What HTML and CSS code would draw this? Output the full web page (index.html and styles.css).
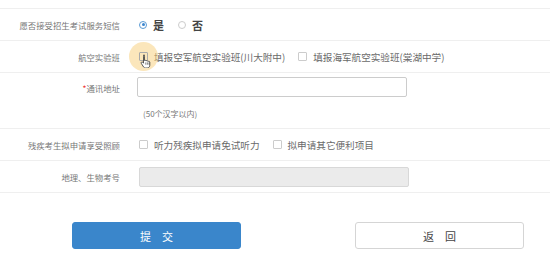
FILE: index.html
```html
<!DOCTYPE html>
<html lang="zh-CN">
<head>
    <meta charset="UTF-8">
    <title>报名信息</title>
    <link rel="stylesheet" href="styles.css">
</head>
<body>
    <div class="form">
        <div class="row">
            <div class="label">愿否接受招生考试服务短信</div>
            <div class="field">
                <span class="radio checked"></span><span class="opt strong">是</span>
                <span class="radio"></span><span class="opt strong">否</span>
            </div>
        </div>
        <div class="row">
            <div class="label">航空实验班</div>
            <div class="field">
                <span class="hl">
                    <span class="check"></span>
                    <svg class="cursor" width="12" height="14" viewBox="0 0 12 14">
                        <path d="M3.5 1.2c.6 0 1 .4 1 1v4.3l.3-.1c.5-.2 1 0 1.2.4.4-.3 1-.2 1.3.2.4-.2 1-.1 1.2.3.5-.2 1.2.1 1.3.7v3.2c0 1.5-1 2.8-2.6 2.8H5.5c-.9 0-1.5-.4-2-1.1L1.3 9.4c-.3-.5-.2-1 .2-1.3.4-.3 1-.2 1.3.2l.7.9V2.2c0-.6.4-1 1-1z" fill="#fff" stroke="#333" stroke-width=".8"/>
                        <path d="M5.8 8.4v2.3M7.4 8.4v2.3M9 8.4v2.3" stroke="#333" stroke-width=".6"/>
                    </svg>
                </span>
                <span class="opt">填报空军航空实验班(川大附中)</span>
                <span class="check"></span><span class="opt">填报海军航空实验班(棠湖中学)</span>
            </div>
        </div>
        <div class="row tall">
            <div class="label"><span class="req">*</span>通讯地址</div>
            <div class="field col">
                <input class="text" type="text">
                <span class="hint">(50个汉字以内)</span>
            </div>
        </div>
        <div class="row">
            <div class="label">残疾考生拟申请享受照顾</div>
            <div class="field">
                <span class="check"></span><span class="opt">听力残疾拟申请免试听力</span>
                <span class="check"></span><span class="opt">拟申请其它便利项目</span>
            </div>
        </div>
        <div class="row">
            <div class="label">地理、生物考号</div>
            <div class="field">
                <input class="text" type="text" disabled>
            </div>
        </div>
    </div>

    <div class="actions">
        <button class="btn primary">提&emsp;交</button>
        <button class="btn">返&emsp;回</button>
    </div>
</body>
</html>
```

FILE: styles.css
```css
body {
    margin: 0;
    padding-top: 8px;
    font-family: "Noto Sans CJK SC", "Noto Sans", sans-serif;
    background: #fff;
    color: #555;
}

.form {
    border-top: 1px solid #efefef;
}

.row {
    display: grid;
    grid-template-columns: 120px 1fr;
    column-gap: 19px;
    align-items: center;
    height: 31px;
    border-bottom: 1px solid #efefef;
}

.row.tall {
    height: 55px;
    align-items: start;
}

.label {
    text-align: right;
    font-size: 8.4px;
    color: #777;
}

.row.tall .label {
    padding-top: 9px;
}

.req {
    color: #e33;
}

.field {
    display: flex;
    align-items: center;
    font-size: 9.6px;
}

.field.col {
    flex-direction: column;
    align-items: flex-start;
    padding-top: 4px;
    margin-left: -2px;
}

.opt {
    margin-right: 13px;
    color: #6a6a6a;
}

.strong {
    font-size: 11px;
    font-weight: bold;
    color: #444;
    margin-right: 14px;
}

.radio {
    width: 8px;
    height: 8px;
    border: 1px solid #ccc;
    border-radius: 50%;
    margin: 0 6px 0 0;
    box-sizing: border-box;
    position: relative;
}

.radio.checked {
    border-color: #5b9bd5;
}

.radio.checked::after {
    content: "";
    position: absolute;
    left: 1.5px;
    top: 1.5px;
    width: 3px;
    height: 3px;
    border-radius: 50%;
    background: #3b86cf;
}

.check {
    width: 9px;
    height: 9px;
    border: 1px solid #ccc;
    border-radius: 1px;
    box-sizing: border-box;
    margin-right: 6px;
    background: #fff;
}

.hl {
    position: relative;
    display: flex;
    align-items: center;
}

.hl::before {
    content: "";
    position: absolute;
    left: -10px;
    top: -10px;
    width: 29px;
    height: 29px;
    border-radius: 50%;
    background: rgba(248, 205, 120, 0.5);
}

.hl .check {
    position: relative;
    border-color: #aaa;
    background: transparent;
}

.cursor {
    position: absolute;
    left: 1px;
    top: 2px;
}

.text {
    width: 270px;
    height: 20px;
    box-sizing: border-box;
    border: 1px solid #ccc;
    border-radius: 2px;
    margin: 0;
    background: #fff;
}

.text:disabled {
    background: #ebebeb;
    border-color: #d8d8d8;
}

.hint {
    font-size: 8px;
    color: #777;
    margin-top: 11px;
    margin-left: 6px;
}

.actions {
    display: flex;
    gap: 114px;
    padding: 29px 0 0 72px;
}

.btn {
    width: 169px;
    height: 27px;
    border-radius: 3px;
    border: 1px solid #d5d5d5;
    background: #fff;
    font-family: inherit;
    font-size: 11px;
    color: #444;
}

.btn.primary {
    background: #3a86cb;
    border-color: #3a86cb;
    color: #fff;
}
```
